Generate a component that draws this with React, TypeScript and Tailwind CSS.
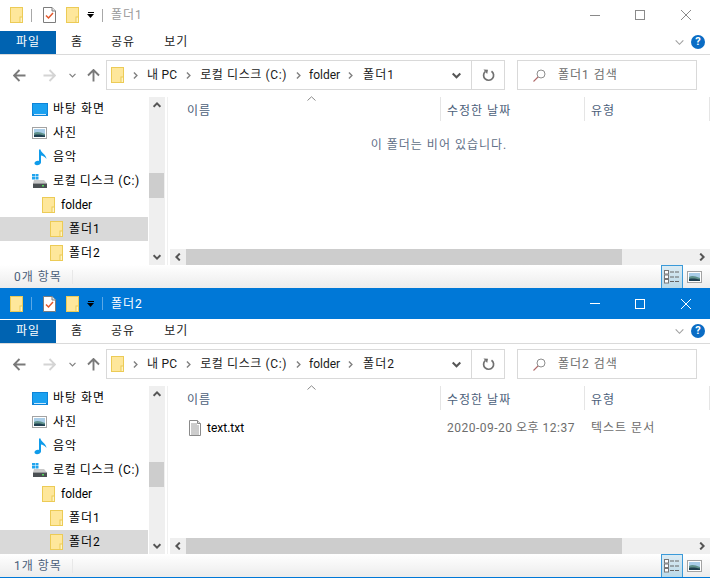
import React from "react";

const Folder = ({ className = "" }: { className?: string }) => (
  <svg width="13" height="16" viewBox="0 0 13 16" className={`shrink-0 ${className}`}>
    <rect x="0.5" y="0.5" width="12" height="15" fill="#fee79b" stroke="#eccb56" />
    <rect x="10" y="10" width="2.5" height="5.5" fill="#fff3c4" stroke="#eccb56" strokeWidth="1" />
  </svg>
);

const Chev = ({ dir, color = "#555", size = 8, w = 1.6 }: { dir: "u" | "d" | "l" | "r"; color?: string; size?: number; w?: number }) => {
  const rot = { u: 180, d: 0, l: 90, r: -90 }[dir];
  return (
    <svg width={size} height={size} viewBox="0 0 8 8" style={{ transform: `rotate(${rot}deg)` }} className="shrink-0">
      <path d="M0.6 2.2 L4 5.6 L7.4 2.2" fill="none" stroke={color} strokeWidth={w} />
    </svg>
  );
};

const Arrow = ({ dir, color }: { dir: "l" | "r" | "u"; color: string }) => {
  const rot = { l: 0, r: 180, u: 90 }[dir];
  return (
    <svg width="13" height="13" viewBox="0 0 13 13" style={{ transform: `rotate(${rot}deg)` }} className="shrink-0">
      <path d="M1 6.5 H12.5 M6.5 1 L1 6.5 L6.5 12" fill="none" stroke={color} strokeWidth="1.9" />
    </svg>
  );
};

const Check = () => (
  <svg width="13" height="16" viewBox="0 0 13 16" className="shrink-0">
    <path d="M0.5 0.5 H9 L12.5 4 V15.5 H0.5 Z" fill="#fff" stroke="#7d7d7d" />
    <path d="M9 0.5 V4 H12.5" fill="#e8e8e8" stroke="#7d7d7d" />
    <path d="M3 8.5 L5.5 11 L10 6" fill="none" stroke="#e2572b" strokeWidth="1.5" />
  </svg>
);

const Scene = ({ w = 15, h = 12 }: { w?: number; h?: number }) => (
  <svg width={w} height={h} viewBox="0 0 15 12" className="shrink-0">
    <rect x="0.5" y="0.5" width="14" height="11" fill="#fff" stroke="#a3a3a3" />
    <rect x="2" y="2" width="11" height="8" fill="#a9cde8" />
    <path d="M2 6 C5 4 8 5 13 7 V10 H2 Z" fill="#5f918a" />
    <path d="M2 8 C6 7 9 8 13 8.5 V10 H2 Z" fill="#1f3f50" />
  </svg>
);

const Desktop = () => (
  <svg width="16" height="13" viewBox="0 0 16 13" className="shrink-0">
    <rect x="0" y="0" width="16" height="13" fill="#0d84d8" />
    <rect x="1" y="1" width="14" height="10" fill="#1ba1f0" />
    <rect x="2" y="11" width="12" height="1" fill="#cfe9fb" />
  </svg>
);

const Note = () => (
  <svg width="13" height="17" viewBox="0 0 13 17" className="shrink-0">
    <path d="M5 12 V0.5 H6.5 C7 4 12 5 12.5 10 C11 7.5 8.5 6.8 7 6.5 V13.5 C7 16 1 17.5 0.5 14.5 C0.3 12.5 3.5 11 5 12 Z" fill="#0f9bea" />
  </svg>
);

const Drive = () => (
  <svg width="15" height="14" viewBox="0 0 15 14" className="shrink-0">
    <rect x="0" y="0" width="3" height="2.5" fill="#20a4ee" />
    <rect x="3.5" y="0" width="3" height="2.5" fill="#20a4ee" />
    <rect x="0" y="3" width="3" height="2.5" fill="#20a4ee" />
    <rect x="3.5" y="3" width="3" height="2.5" fill="#20a4ee" />
    <path d="M2 6 H12 L15 9.5 H1 Z" fill="#c9c9c9" />
    <rect x="1" y="9.5" width="14" height="4.5" fill="#4a4f52" />
    <rect x="10" y="11" width="2" height="1.5" fill="#54d65a" />
  </svg>
);

const TextFile = () => (
  <svg width="12" height="16" viewBox="0 0 12 16" className="shrink-0">
    <path d="M0.5 0.5 H8.5 L11.5 3.5 V15.5 H0.5 Z" fill="#fff" stroke="#8a8a8a" />
    <path d="M2 4 H8 M2 6 H10 M2 8 H10 M2 10 H10 M2 12 H10 M2 14 H10" stroke="#9a9a9a" strokeWidth="1" />
    <path d="M8.5 0.5 V3.5 H11.5" fill="#ddd" stroke="#8a8a8a" />
  </svg>
);

const Help = () => (
  <span className="w-[14px] h-[14px] rounded-full bg-[#0a6cc4] text-white text-[11px] font-bold leading-[14px] text-center tracking-normal">?</span>
);

const NavRow = ({ pl, icon, label, selected, gap, track }: { pl: string; icon: React.ReactNode; label: string; selected?: boolean; gap: string; track?: string }) => (
  <div className={`h-[24px] flex items-center ${pl} ${gap} ${selected ? "bg-[#d9d9d9]" : ""}`}>
    {icon}
    <span className={`text-black ${track ?? ""}`}>{label}</span>
  </div>
);

function Explorer({ name, active, count, last }: { name: string; active?: boolean; count: string; last?: boolean }) {
  const titleText = active ? "text-white" : "text-[#9a9a9a]";
  const ctl = active ? "#ffffff" : "#8a8a8a";
  const sep = active ? "bg-[#5ca8e6]" : "bg-[#a8a8a8]";
  return (
    <div className={`flex flex-col ${active ? "h-[290px]" : "h-[288px]"} bg-white ${last ? "border-b border-[#0078d7]" : ""}`}>
      {/* title bar */}
      <div className={`${active ? "h-[31px] bg-[#0078d7]" : "h-[30px] bg-white"} flex items-center pl-[10px]`}>
        <Folder />
        <span className={`w-px h-[13px] ml-[8px] ${sep}`} />
        <span className="ml-[11px]"><Check /></span>
        <span className="ml-[10px]"><Folder /></span>
        <span className="ml-[8px] flex flex-col items-center">
          <span className="w-[6px] h-px bg-black mb-[1px]" />
          <svg width="7" height="4" viewBox="0 0 7 4"><path d="M0 0 H7 L3.5 4 Z" fill="#000" /></svg>
        </span>
        <span className={`w-px h-[13px] ml-[8px] ${sep}`} />
        <span className={`ml-[8px] ${titleText}`}>{name}</span>
        <div className="ml-auto flex items-center">
          <span className="w-[10px] h-px mr-[35px]" style={{ backgroundColor: ctl }} />
          <span className="w-[10px] h-[10px] border mr-[36px]" style={{ borderColor: ctl }} />
          <svg width="10" height="10" viewBox="0 0 10 10" className="mr-[19px]">
            <path d="M0 0 L10 10 M10 0 L0 10" stroke={ctl} strokeWidth="1" />
          </svg>
        </div>
      </div>
      {/* ribbon */}
      <div className="h-[24px] flex items-center border-b border-[#dadada] box-content">
        <div className="w-[56px] h-[23px] bg-[#0063b1] text-white flex items-center justify-center">파일</div>
        <span className="ml-[15px] text-[#222]">홈</span>
        <span className="ml-[28px] text-[#222]">공유</span>
        <span className="ml-[29px] text-[#222]">보기</span>
        <div className="ml-auto flex items-center gap-[7px] pr-[5px]">
          <Chev dir="d" color="#a0a0a0" size={9} w={1} />
          <Help />
        </div>
      </div>
      {/* toolbar */}
      <div className="h-[30px] mt-[5px] flex items-center pl-[13px] pr-[13px]">
        <Arrow dir="l" color="#7a7a7a" />
        <span className="ml-[17px]"><Arrow dir="r" color="#d4d4d4" /></span>
        <span className="ml-[13px]"><Chev dir="d" color="#808080" size={7} w={1.4} /></span>
        <span className="ml-[11px]"><Arrow dir="u" color="#7a7a7a" /></span>
        <div className="ml-[6px] w-[399px] h-[30px] border border-[#d9d9d9] flex items-center pl-[4px] shrink-0">
          <Folder />
          <span className="ml-[8px]"><Chev dir="r" color="#808080" size={7} /></span>
          <span className="ml-[8px] text-[#1a1a1a] tracking-[0.2px]">내 PC</span>
          <span className="ml-[8px]"><Chev dir="r" color="#808080" size={7} /></span>
          <span className="ml-[8px] text-[#1a1a1a] tracking-[0.6px]">로컬 디스크 (C:)</span>
          <span className="ml-[8px]"><Chev dir="r" color="#808080" size={7} /></span>
          <span className="ml-[7px] text-[#1a1a1a] tracking-normal">folder</span>
          <span className="ml-[7px]"><Chev dir="r" color="#808080" size={7} /></span>
          <span className="ml-[9px] text-[#1a1a1a]">{name}</span>
          <div className="ml-auto flex items-center h-full">
            <span className="mr-[10px]"><Chev dir="d" color="#555" size={9} w={1.8} /></span>
            <div className="w-[33px] h-full border-l border-[#d9d9d9] flex items-center justify-center">
              <svg width="13" height="13" viewBox="0 0 13 13">
                <path d="M3.2 2.6 A5 5 0 1 0 9.5 2.2" fill="none" stroke="#707070" strokeWidth="1.7" />
                <path d="M1.5 0.5 L6 0.8 L5.2 5 Z" fill="#707070" />
              </svg>
            </div>
          </div>
        </div>
        <div className="ml-[12px] w-[180px] h-[30px] border border-[#d9d9d9] flex items-center pl-[15px] shrink-0">
          <svg width="13" height="13" viewBox="0 0 13 13">
            <circle cx="8" cy="5" r="4" fill="none" stroke="#8d8d8d" />
            <path d="M5 8 L0.5 12.5" stroke="#b06a6a" strokeWidth="1.1" />
          </svg>
          <span className="ml-[12px] text-[#6d6d6d]">{name} 검색</span>
        </div>
      </div>
      {/* body */}
      <div className="mt-[7px] flex-1 min-h-0 flex">
        <div className="w-[148px] shrink-0 h-[168px] overflow-hidden">
          <NavRow pl="pl-[32px]" gap="gap-[5px]" icon={<Desktop />} label="바탕 화면" />
          <NavRow pl="pl-[32px]" gap="gap-[6px]" icon={<Scene />} label="사진" />
          <NavRow pl="pl-[34px]" gap="gap-[6px]" icon={<Note />} label="음악" />
          <NavRow pl="pl-[32px]" gap="gap-[6px]" icon={<Drive />} label="로컬 디스크 (C:)" track="tracking-[0.6px]" />
          <NavRow pl="pl-[42px]" gap="gap-[6px]" icon={<Folder />} label="folder" track="tracking-normal" />
          <NavRow pl="pl-[50px]" gap="gap-[6px]" icon={<Folder />} label="폴더1" selected={name === "폴더1"} />
          <NavRow pl="pl-[50px]" gap="gap-[6px]" icon={<Folder />} label="폴더2" selected={name === "폴더2"} />
        </div>
        <div className="ml-[1px] w-[16px] h-[168px] bg-[#efefef] flex flex-col">
          <div className="h-[16px] flex items-center justify-center"><Chev dir="u" color="#555" size={8} w={2} /></div>
          <div className="h-[60px]" />
          <div className="w-[15px] h-[25px] bg-[#cdcdcd]" />
          <div className="flex-1" />
          <div className="h-[16px] flex items-center justify-center"><Chev dir="d" color="#555" size={8} w={2} /></div>
        </div>
        <div className="flex-1 ml-[2px] border-l border-[#f0f0f0] pl-[2px] flex flex-col h-[168px] min-w-0">
          <div className="relative h-[24px] flex shrink-0 text-[#4c607a]">
            <div className="w-[271px] pl-[17px] pt-[3px] flex items-center border-r border-[#e5e5e5]">이름</div>
            <div className="w-[144px] pl-[6px] pt-[3px] flex items-center border-r border-[#e5e5e5]">수정한 날짜</div>
            <div className="w-[125px] pl-[6px] pt-[3px] flex items-center border-r border-[#e5e5e5]">유형</div>
            <div className="absolute left-[137px] -top-[1px]">
              <svg width="9" height="5" viewBox="0 0 9 5"><path d="M0.5 4.5 L4.5 0.8 L8.5 4.5" fill="none" stroke="#8a8a8a" /></svg>
            </div>
          </div>
          <div className="flex-1 min-h-0">
            {active ? (
              <div className="flex h-[24px] items-center mt-[6px]">
                <div className="w-[271px] pl-[19px] flex items-center gap-[6px] text-black">
                  <TextFile />
                  <span className="tracking-normal">text.txt</span>
                </div>
                <div className="w-[144px] pl-[6px] text-[#6d6d6d] tracking-[0.5px]">2020-09-20 오후 12:37</div>
                <div className="pl-[6px] text-[#6d6d6d]">텍스트 문서</div>
              </div>
            ) : (
              <div className="w-[538px] text-center text-[#5f6f87] mt-[18px]">이 폴더는 비어 있습니다.</div>
            )}
          </div>
          <div className="h-[16px] flex bg-[#efefef] shrink-0 items-stretch">
            <div className="w-[16px] flex items-center justify-center"><Chev dir="l" color="#555" size={8} w={2} /></div>
            <div className="w-[436px] bg-[#cdcdcd]" />
            <div className="flex-1" />
            <div className="w-[16px] flex items-center justify-center"><Chev dir="r" color="#555" size={8} w={2} /></div>
          </div>
        </div>
      </div>
      {/* status */}
      <div className="h-[23px] shrink-0 flex items-center bg-gradient-to-b from-white to-[#ececec] pl-[14px]">
        <span className="text-[#4c607a]">{count}</span>
        <span className="ml-[10px] w-px h-[14px] bg-[#e8e8e8]" />
        <div className="ml-auto flex items-center pr-[8px] h-full">
          <div className="w-[22px] h-full bg-gradient-to-b from-[#dcebf3] to-[#b9d9e8] border border-b-0 border-[#3a9ad9] flex items-center justify-center">
            <svg width="16" height="14" viewBox="0 0 16 14">
              <rect x="0.5" y="0.5" width="4" height="3.5" fill="#fff" stroke="#777" />
              <rect x="0.5" y="5" width="4" height="3.5" fill="#fff" stroke="#777" />
              <rect x="0.5" y="9.5" width="4" height="3.5" fill="#fff" stroke="#777" />
              <path d="M6 2 H10 M11 2 H15 M6 7 H10 M11 7 H15 M6 11.5 H10 M11 11.5 H15" stroke="#666" />
            </svg>
          </div>
          <span className="ml-[4px] flex"><Scene /></span>
        </div>
      </div>
    </div>
  );
}

export default function App() {
  return (
    <div className="w-[710px] h-[578px] overflow-hidden bg-white text-[12px] leading-none tracking-[1px]" style={{ fontFamily: 'Roboto,"Noto Sans CJK KR",sans-serif' }}>
      <Explorer name="폴더1" count="0개 항목" />
      <Explorer name="폴더2" active count="1개 항목" last />
    </div>
  );
}
